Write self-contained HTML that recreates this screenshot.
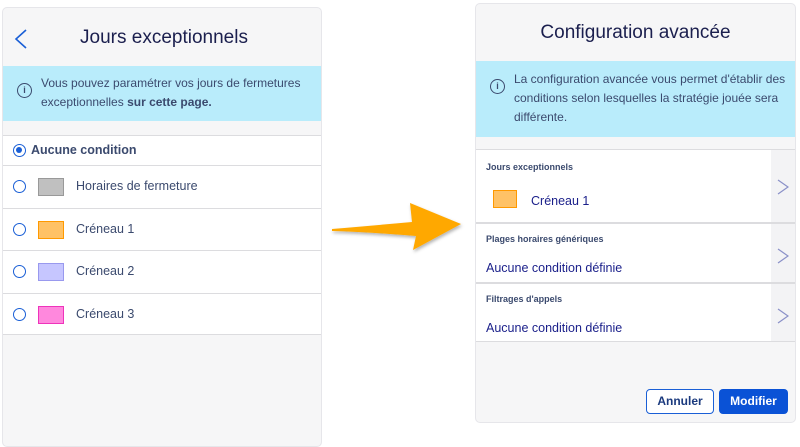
<!DOCTYPE html>
<html><head><style>
*{margin:0;padding:0;box-sizing:border-box}
body{width:800px;height:430px;background:#fff;font-family:"Liberation Sans",sans-serif;position:relative;overflow:hidden;color:#1b1f5e}
.p{position:absolute;background:#f6f6f7;border:1px solid #e6e6ea;border-radius:5px;overflow:hidden}
.abs{position:absolute}
.info{position:absolute;left:0;right:0;background:#b9ecfb;color:#3b4a6e;font-size:12px;line-height:19px}
.ic{position:absolute;width:15px;height:15px;border:1.3px solid #3b4a6e;border-radius:50%;font-size:9px;text-align:center;line-height:13px;font-weight:bold}
.row{position:absolute;left:0;right:0;background:#fff;border-top:1px solid #dcdcdf}
.rad{position:absolute;left:10px;width:13px;height:13px;border:1.5px solid #1a5fd6;border-radius:50%}
.sw{position:absolute;left:35px;width:26px;height:18px;border:1px solid}
.lbl{position:absolute;left:73px;font-size:12.5px;color:#3b4a6e}
.chev{position:absolute;right:0;width:24px;top:0;bottom:0;background:#f3f3f5}
.sm{position:absolute;left:10px;font-size:9px;font-weight:bold;color:#3b4a6e}
.it{position:absolute;font-size:12.5px;color:#1a1f8a}
</style></head><body>
<div class="p" style="left:2px;top:7px;width:320px;height:440px">
 <svg class="abs" style="left:10px;top:20px" width="16" height="22"><path d="M13 2 L3 11 L13 20" fill="none" stroke="#1a5fd6" stroke-width="1.6"/></svg>
 <div class="abs" style="left:0;right:0;top:19px;text-align:center;font-size:19px;color:#1b1f4e;padding-left:4px">Jours exceptionnels</div>
 <div class="info" style="top:58px;height:55px"><div class="ic" style="left:14px;top:17px">i</div>
 <div class="abs" style="left:38px;top:8px">Vous pouvez paramétrer vos jours de fermetures<br>exceptionnelles <b>sur cette page.</b></div></div>
 <div class="row" style="top:127px;height:30px"><div class="rad" style="top:8px"><div style="position:absolute;left:2px;top:2px;width:6px;height:6px;border-radius:50%;background:#1a5fd6"></div></div><div class="abs" style="left:28px;top:7px;font-size:12.5px;font-weight:bold;color:#3b4a6e">Aucune condition</div></div>
 <div class="row" style="top:157px;height:43px"><div class="rad" style="top:14px"></div><div class="sw" style="top:12px;background:#c0c0c0;border-color:#999"></div><div class="lbl" style="top:13px">Horaires de fermeture</div></div>
 <div class="row" style="top:200px;height:42px"><div class="rad" style="top:14px"></div><div class="sw" style="top:12px;background:#ffc266;border-color:#ff9900"></div><div class="lbl" style="top:13px">Créneau 1</div></div>
 <div class="row" style="top:242px;height:43px"><div class="rad" style="top:14px"></div><div class="sw" style="top:12px;background:#c6c6ff;border-color:#9999ee"></div><div class="lbl" style="top:13px">Créneau 2</div></div>
 <div class="row" style="top:285px;height:42px;border-bottom:1px solid #dcdcdf"><div class="rad" style="top:14px"></div><div class="sw" style="top:12px;background:#ff88dd;border-color:#ee33bb"></div><div class="lbl" style="top:13px">Créneau 3</div></div>
</div>
<svg class="abs" style="left:328px;top:198px" width="140" height="60"><defs><filter id="s"><feDropShadow dx="1" dy="2" stdDeviation="1.5" flood-opacity=".3"/></filter></defs>
<path d="M4 31 Q40 28 84 24 L82 5 L133 26 L85 52 L88 38 Q40 34 4 33 Z" fill="#ffa800" filter="url(#s)"/></svg>
<div class="p" style="left:475px;top:3px;width:321px;height:420px">
 <div class="abs" style="left:0;right:0;top:18px;text-align:center;font-size:19px;color:#1b1f4e">Configuration avancée</div>
 <div class="info" style="top:57px;height:76px"><div class="ic" style="left:14px;top:18px">i</div>
 <div class="abs" style="left:38px;top:9px">La configuration avancée vous permet d'établir des<br>conditions selon lesquelles la stratégie jouée sera<br>différente.</div></div>
 <div class="row" style="top:145px;height:73px"><div class="sm" style="top:12px">Jours exceptionnels</div><div class="sw" style="left:17px;top:40px;width:24px;background:#ffc266;border-color:#ff9900"></div><div class="it" style="left:55px;top:44px">Créneau 1</div><div class="chev"><svg style="position:absolute;left:6px;top:29px" width="12" height="16"><path d="M1 1 L11 8 L1 15" fill="none" stroke="#8a90c8" stroke-width="1.2"/></svg></div></div>
 <div class="row" style="top:218px;height:60px;border-top:2px solid #dcdcdf"><div class="sm" style="top:10px">Plages horaires génériques</div><div class="it" style="left:10px;top:37px">Aucune condition définie</div><div class="chev"><svg style="position:absolute;left:6px;top:24px" width="12" height="16"><path d="M1 1 L11 8 L1 15" fill="none" stroke="#8a90c8" stroke-width="1.2"/></svg></div></div>
 <div class="row" style="top:278px;height:60px;border-top:2px solid #dcdcdf;border-bottom:1px solid #dcdcdf"><div class="sm" style="top:10px">Filtrages d'appels</div><div class="it" style="left:10px;top:37px">Aucune condition définie</div><div class="chev"><svg style="position:absolute;left:6px;top:24px" width="12" height="16"><path d="M1 1 L11 8 L1 15" fill="none" stroke="#8a90c8" stroke-width="1.2"/></svg></div></div>
 <div class="abs" style="left:170px;top:385px;width:68px;height:25px;border:1px solid #1a5fd6;border-radius:4px;background:#fff;color:#1b3a7e;font-weight:bold;font-size:12px;text-align:center;line-height:23px">Annuler</div>
 <div class="abs" style="left:243px;top:385px;width:69px;height:25px;border-radius:4px;background:#0a52d6;color:#fff;font-weight:bold;font-size:12px;text-align:center;line-height:25px">Modifier</div>
</div>
</body></html>
